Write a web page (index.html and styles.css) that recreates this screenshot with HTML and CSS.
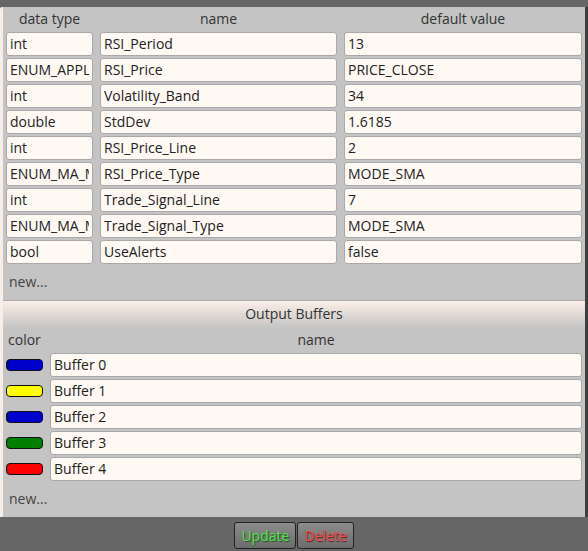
FILE: index.html
```html
<!DOCTYPE html>
<html lang="en">
<head>
  <meta charset="UTF-8">
  <title>Indicator Properties</title>
  <link rel="stylesheet" href="styles.css">
</head>
<body>
  <div class="panel">
    <div class="params">
      <div class="col-head">data type</div>
      <div class="col-head">name</div>
      <div class="col-head">default value</div>

      <input class="field" value="int">
      <input class="field" value="RSI_Period">
      <input class="field" value="13">

      <input class="field" value="ENUM_APPLIED_PRICE">
      <input class="field" value="RSI_Price">
      <input class="field" value="PRICE_CLOSE">

      <input class="field" value="int">
      <input class="field" value="Volatility_Band">
      <input class="field" value="34">

      <input class="field" value="double">
      <input class="field" value="StdDev">
      <input class="field" value="1.6185">

      <input class="field" value="int">
      <input class="field" value="RSI_Price_Line">
      <input class="field" value="2">

      <input class="field" value="ENUM_MA_METHOD">
      <input class="field" value="RSI_Price_Type">
      <input class="field" value="MODE_SMA">

      <input class="field" value="int">
      <input class="field" value="Trade_Signal_Line">
      <input class="field" value="7">

      <input class="field" value="ENUM_MA_METHOD">
      <input class="field" value="Trade_Signal_Type">
      <input class="field" value="MODE_SMA">

      <input class="field" value="bool">
      <input class="field" value="UseAlerts">
      <input class="field" value="false">
    </div>
    <div class="new-row">new...</div>

    <div class="section-title">Output Buffers</div>
    <div class="buffers">
      <div class="col-head left">color</div>
      <div class="col-head">name</div>

      <span class="swatch" style="background: #0000cc"></span>
      <input class="field" value="Buffer 0">

      <span class="swatch" style="background: #ffff00"></span>
      <input class="field" value="Buffer 1">

      <span class="swatch" style="background: #0000cc"></span>
      <input class="field" value="Buffer 2">

      <span class="swatch" style="background: #008000"></span>
      <input class="field" value="Buffer 3">

      <span class="swatch" style="background: #ff0000"></span>
      <input class="field" value="Buffer 4">
    </div>
    <div class="new-row">new...</div>
  </div>

  <div class="actions">
    <button class="btn update">Update</button>
    <button class="btn delete">Delete</button>
  </div>
</body>
</html>
```

FILE: styles.css
```css
body {
  margin: 0;
  padding-top: 7px;
  background: #666666;
  font-family: "Open Sans", "Noto Sans", sans-serif;
  font-size: 14px;
  color: #333;
}

.panel {
  width: 582px;
  height: 510px;
  background: #c4c4c4;
  border-left: 3px solid #f7eee8;
  border-right: 3px solid #3e3e3e;
  border-top-left-radius: 2px;
}

.params {
  display: grid;
  grid-template-columns: 87px 237px 238px;
  grid-template-rows: 23px;
  grid-auto-rows: 24px;
  column-gap: 7px;
  row-gap: 2px;
  padding: 0 3px;
}

.col-head {
  text-align: center;
  line-height: 23px;
  color: #333;
}

.col-head.left {
  text-align: left;
  padding-left: 2px;
}

.field {
  box-sizing: border-box;
  width: 100%;
  height: 24px;
  margin: 0;
  padding: 0 3px 2px;
  border: 1px solid #a9a9a9;
  border-radius: 3px;
  background: #fff9f4;
  font-family: inherit;
  font-size: 14px;
  color: #222;
  outline: none;
}

.new-row {
  height: 36px;
  line-height: 35px;
  padding-left: 6px;
  color: #444;
}

.section-title {
  height: 27px;
  line-height: 25px;
  text-align: center;
  border-top: 1px solid #aaa;
  background: linear-gradient(#fbefe7, #c4c4c4);
  color: #333;
}

.buffers {
  display: grid;
  grid-template-columns: 37px 1fr;
  grid-template-rows: 23px;
  grid-auto-rows: 24px;
  column-gap: 7px;
  row-gap: 2px;
  padding: 0 3px;
}

.swatch {
  align-self: center;
  box-sizing: border-box;
  height: 12px;
  border: 1px solid #111;
  border-radius: 4px;
}

.actions {
  display: flex;
  justify-content: center;
  gap: 1px;
  padding-top: 5px;
}

.btn {
  height: 27px;
  padding: 0 6px;
  border: 1px solid #222;
  border-radius: 3px;
  background: linear-gradient(#8c8c8c, #6c6c6c);
  font-family: inherit;
  font-size: 14px;
  cursor: pointer;
}

.btn.update {
  color: #4ee24e;
  text-shadow: 1px 1px 1px #1f4f1f;
}

.btn.delete {
  color: #f05050;
  text-shadow: 1px 1px 1px #5a1f1f;
}
```
